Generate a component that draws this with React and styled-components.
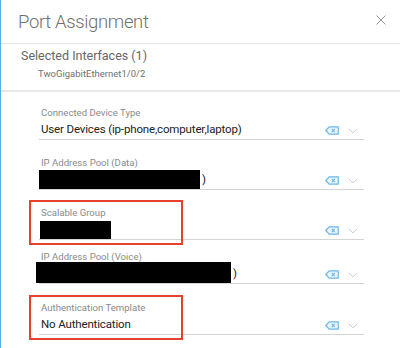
import React from "react";
import styled, { createGlobalStyle } from "styled-components";

//================================================================//
//Global Styles//
const GlobalStyle = createGlobalStyle`
  html, body {
    margin: 0;
    padding: 0;
    background: #fff;
  }
  body {
    font-family: Roboto, "Liberation Sans", Arial, sans-serif;
    overflow: hidden;
  }
`;

//================================================================//
//Styled Components//
const Dialog = styled.div`
  width: 400px;
  height: 348px;
  box-sizing: border-box;
  border-left: 1px solid #5aaee6;
  background: #fff;
  overflow: hidden;
`;

const Header = styled.div`
  height: 44px;
  display: flex;
  align-items: center;
  justify-content: space-between;
  padding: 0 14px 0 17px;
  box-sizing: border-box;
  border-bottom: 1px solid #e6e6e6;
`;

const Title = styled.h2`
  margin: 0;
  font-size: 18.5px;
  font-weight: 300;
  color: #6f6f6f;
  letter-spacing: -0.35px;
`;

const CloseButton = styled.button`
  border: 0;
  background: none;
  padding: 0;
  width: 11px;
  height: 11px;
  margin-bottom: 4px;
  display: flex;
  align-items: center;
  justify-content: center;
  cursor: pointer;
`;

const Selection = styled.div`
  height: 48px;
  box-sizing: border-box;
  padding: 4px 0 0 20px;
  border-bottom: 2px solid #e8e8e8;
`;

const SelectionTitle = styled.div`
  font-size: 12.5px;
  color: #666;
  line-height: 16px;
`;

const SelectionItem = styled.div`
  font-size: 9.5px;
  color: #707070;
  line-height: 14px;
  margin: 3px 0 0 17px;
`;

const Form = styled.div`
  padding: 0 36px 0 38px;
`;

const Field = styled.div`
  position: relative;
  margin-top: ${(p) => p.$mt}px;

  ${(p) =>
    p.$marked &&
    `
    &::before {
      content: "";
      position: absolute;
      left: -10px;
      top: -7px;
      bottom: -5px;
      width: 154px;
      box-sizing: border-box;
      border: 2px solid #e8402f;
      pointer-events: none;
    }
  `}
`;

const Label = styled.div`
  font-size: 9.6px;
  line-height: 12px;
  color: #8a8a8a;
  padding-left: 2px;
`;

const ValueRow = styled.div`
  display: flex;
  align-items: center;
  height: 20px;
  border-bottom: 1px solid #d4d4d4;
`;

const Value = styled.div`
  flex: 1;
  display: flex;
  align-items: center;
  font-size: 11.5px;
  letter-spacing: -0.15px;
  color: #222;
  padding-left: 2px;
  white-space: nowrap;
`;

const Redact = styled.span`
  display: inline-block;
  width: ${(p) => p.$w}px;
  height: ${(p) => p.$h}px;
  margin-left: ${(p) => p.$dx || 0}px;
  margin-top: ${(p) => p.$dy || 0}px;
  margin-right: 2px;
  background: #000;
`;

const Icons = styled.div`
  display: flex;
  align-items: center;
  gap: 9px;
  padding-right: 6px;
  margin-top: 3px;
`;

//================================================================//
//Icons//
const CloseIcon = () => (
  <svg width="10" height="10" viewBox="0 0 10 10">
    <path d="M0.5 0.5 L9.5 9.5 M9.5 0.5 L0.5 9.5" stroke="#9a9a9a" strokeWidth="1" />
  </svg>
);

const ClearIcon = () => (
  <svg width="14" height="9" viewBox="0 0 14 9">
    <path
      d="M4.2 0.8 H13.2 V8.2 H4.2 L0.8 4.5 Z"
      fill="#eaf5fc"
      stroke="#6ab6e8"
      strokeWidth="1.2"
      strokeLinejoin="round"
    />
    <path d="M6.8 2.8 L9.8 6.2 M9.8 2.8 L6.8 6.2" stroke="#6ab6e8" strokeWidth="1.1" />
  </svg>
);

const Chevron = () => (
  <svg width="10" height="6" viewBox="0 0 10 6">
    <polyline points="0.5,0.8 5,4.8 9.5,0.8" fill="none" stroke="#cdcdcd" strokeWidth="1" />
  </svg>
);

//================================================================//
//Data//
const fields = [
  { label: "Connected Device Type", value: "User Devices (ip-phone,computer,laptop)", mt: 15 },
  { label: "IP Address Pool (Data)", redact: { w: 161, h: 19, dx: -2, dy: 0 }, paren: true, mt: 17 },
  { label: "Scalable Group", redact: { w: 71, h: 18, dx: -1, dy: 1 }, marked: true, mt: 17 },
  { label: "IP Address Pool (Voice)", redact: { w: 195, h: 21, dx: -5, dy: -1 }, paren: true, mt: 11 },
  { label: "Authentication Template", value: "No Authentication", marked: true, mt: 18 },
];

//================================================================//
//Render//
const App = () => {
  return (
    <>
      <GlobalStyle />
      <Dialog>
        <Header>
          <Title>Port Assignment</Title>
          <CloseButton aria-label="Close">
            <CloseIcon />
          </CloseButton>
        </Header>
        <Selection>
          <SelectionTitle>Selected Interfaces (1)</SelectionTitle>
          <SelectionItem>TwoGigabitEthernet1/0/2</SelectionItem>
        </Selection>
        <Form>
          {fields.map((f) => (
            <Field key={f.label} $mt={f.mt} $marked={f.marked}>
              <Label>{f.label}</Label>
              <ValueRow>
                <Value>
                  {f.redact && (
                    <Redact $w={f.redact.w} $h={f.redact.h} $dx={f.redact.dx} $dy={f.redact.dy} />
                  )}
                  {f.value}
                  {f.paren && ")"}
                </Value>
                <Icons>
                  <ClearIcon />
                  <Chevron />
                </Icons>
              </ValueRow>
            </Field>
          ))}
        </Form>
      </Dialog>
    </>
  );
};

export default App;
